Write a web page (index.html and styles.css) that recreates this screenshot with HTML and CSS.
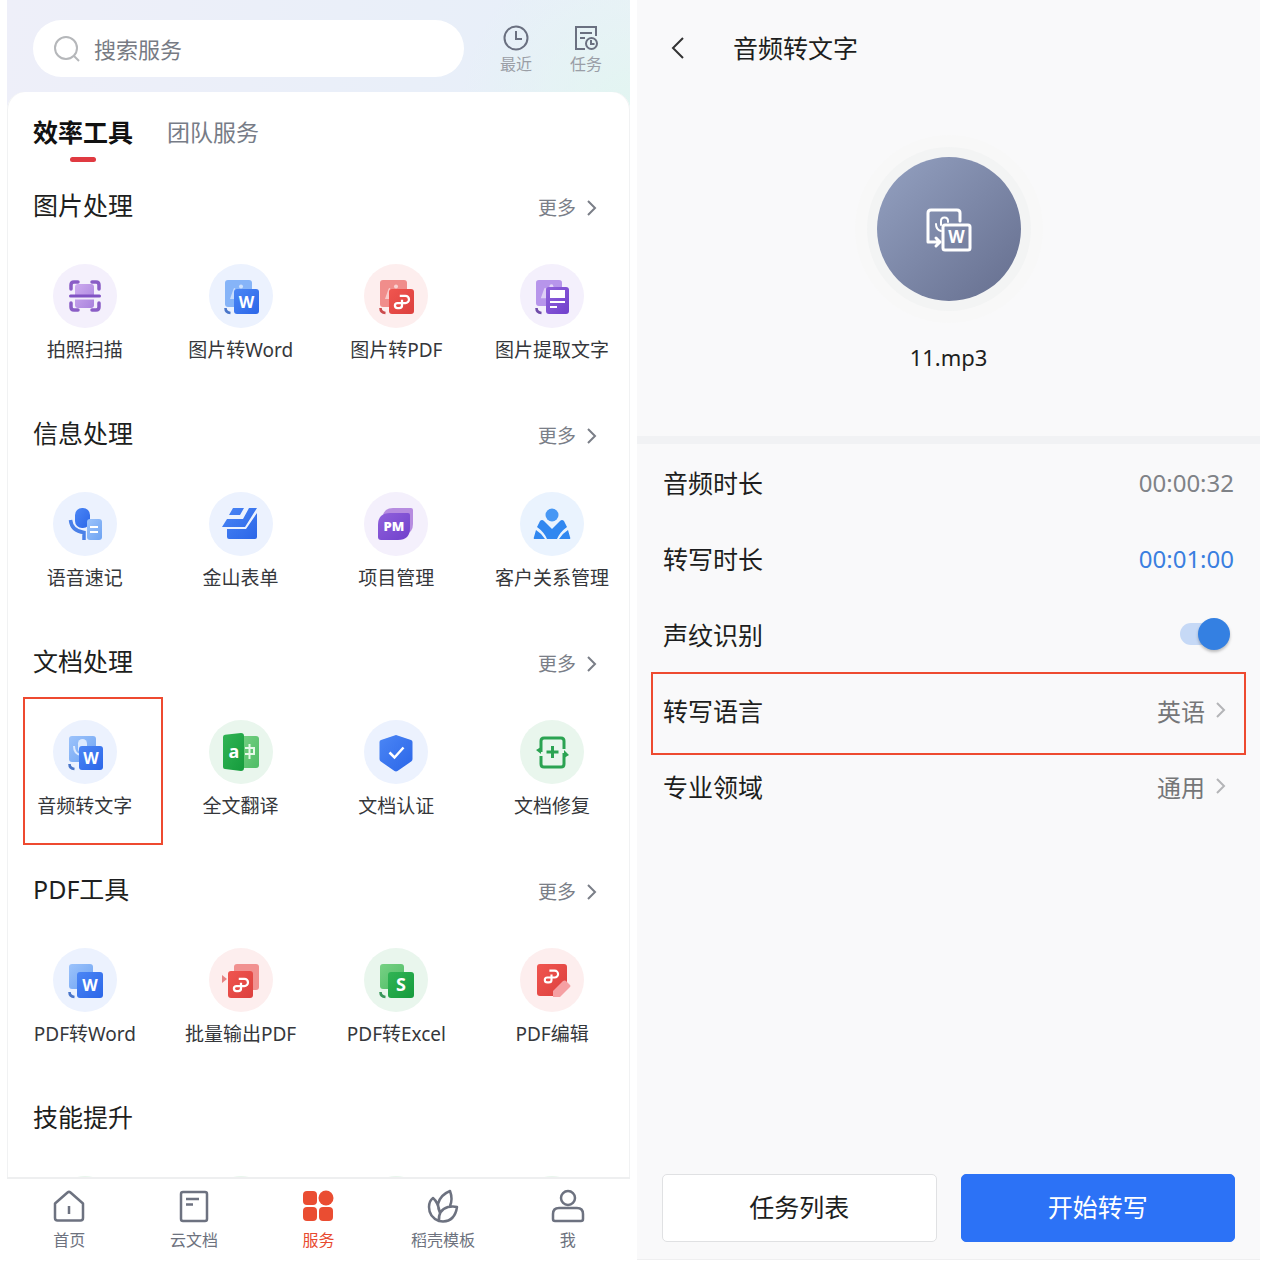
FILE: index.html
```
<!DOCTYPE html>
<html lang="zh-CN">
<head>
    <meta charset="UTF-8">
    <meta name="viewport" content="width=device-width, initial-scale=1.0">
    <title>音频转文字</title>
    <link rel="stylesheet" href="styles.css">
</head>
<body>
    <!-- 公用图标 -->
    <svg class="defs" aria-hidden="true">
        <defs>
            <linearGradient id="blue" x1="0" y1="0" x2="1" y2="1"><stop offset="0" stop-color="#4b86f5"/><stop offset="1" stop-color="#2b66e8"/></linearGradient>
            <linearGradient id="sky" x1="0" y1="0" x2="1" y2="1"><stop offset="0" stop-color="#9cc3fb"/><stop offset="1" stop-color="#6ea3f2"/></linearGradient>
            <linearGradient id="red" x1="0" y1="0" x2="1" y2="1"><stop offset="0" stop-color="#f0554f"/><stop offset="1" stop-color="#dc403e"/></linearGradient>
            <linearGradient id="purple" x1="0" y1="0" x2="1" y2="1"><stop offset="0" stop-color="#9061db"/><stop offset="1" stop-color="#7040cc"/></linearGradient>
            <linearGradient id="lilac" x1="0" y1="0" x2="1" y2="1"><stop offset="0" stop-color="#cdabef"/><stop offset="1" stop-color="#a982dd"/></linearGradient>
            <linearGradient id="green" x1="0" y1="0" x2="1" y2="1"><stop offset="0" stop-color="#31b455"/><stop offset="1" stop-color="#159b3c"/></linearGradient>
            <linearGradient id="mint" x1="0" y1="0" x2="1" y2="1"><stop offset="0" stop-color="#77d184"/><stop offset="1" stop-color="#4fbc66"/></linearGradient>
        </defs>
        <symbol id="chevron" viewBox="0 0 12 18"><path d="M2 2l7 7-7 7" fill="none" stroke="currentColor" stroke-width="2"/></symbol>
        <symbol id="swirl" viewBox="0 0 16 16"><path d="M6 2.500h5a3.200 3.200 0 0 1 0 6.400H4a2.300 2.300 0 0 0 0 4.600h1.500q2.500 0 2.500-2.300V6" fill="none" stroke="#fff" stroke-width="2"/></symbol>
        <symbol id="photo" viewBox="0 0 27 27"><rect width="27" height="27" rx="3" fill="currentColor"/><path d="M5 19l3.500-10q1-2 2 0l2 10z" fill="#fff" opacity=".55"/><circle cx="16" cy="6.500" r="2" fill="#fff" opacity=".6"/></symbol>
        <symbol id="hook" viewBox="0 0 8 8"><path d="M1.500 1q0 4.500 5 5" fill="none" stroke="currentColor" stroke-width="2.600"/></symbol>
    </svg>

    <div class="screens">
        <main class="screen services">
            <header class="top">
                <label class="search">
                    <svg width="28" height="28" viewBox="0 0 28 28"><circle cx="13" cy="13" r="11" /><path d="M21 21l5 5"/></svg>
                    <input type="search" placeholder="搜索服务" aria-label="搜索服务">
                </label>
                <a class="action" href="#">
                    <svg width="28" height="28" viewBox="0 0 28 28"><circle cx="14" cy="14" r="11.500"/><path d="M14 7v8h6"/></svg>
                    最近
                </a>
                <a class="action" href="#">
                    <svg width="28" height="28" viewBox="0 0 28 28"><path d="M24 12V3H4v22h9M8 9h12M8 14h5"/><circle cx="19.500" cy="19.500" r="5.500"/><path d="M19 16v4h3.500"/></svg>
                    任务
                </a>
            </header>

            <div class="sheet">
                <nav class="tabs">
                    <button class="tab active">效率工具</button>
                    <button class="tab">团队服务</button>
                </nav>

                <section class="group">
                    <div class="group-head">
                        <h2>图片处理</h2>
                        <a class="more" href="#">更多 <svg width="12" height="18"><use href="#chevron"/></svg></a>
                    </div>
                    <div class="tools">
                        <a class="tool" href="#">
                            <svg class="icon violet" viewBox="0 0 64 64">
                                <rect x="22" y="20" width="19" height="24" rx="3" fill="url(#lilac)"/>
                                <path d="M18 25v-4q0-3 3-3h4M39 18h4q3 0 3 3v4M18 39v4q0 3 3 3h4M39 46h4q3 0 3-3v-4" fill="none" stroke="#8a5dc6" stroke-width="3.500" stroke-linecap="round"/>
                                <path d="M22 34h20" stroke="#f2ecfb" stroke-width="3"/>
                                <path d="M17.500 32h29" stroke="#8153c4" stroke-width="3" stroke-linecap="round"/>
                            </svg>
                            拍照扫描
                        </a>
                        <a class="tool" href="#">
                            <svg class="icon azure" viewBox="0 0 64 64">
                                <use href="#photo" x="16" y="16" width="27" height="27" color="#86b4f8"/>
                                <use href="#hook" x="15" y="43" width="8" height="8" color="#4a76c9"/>
                                <rect x="25" y="25" width="25" height="25" rx="3" fill="url(#blue)"/>
                                <text class="mark" x="37.500" y="44">W</text>
                            </svg>
                            图片转Word
                        </a>
                        <a class="tool" href="#">
                            <svg class="icon rose" viewBox="0 0 64 64">
                                <use href="#photo" x="16" y="16" width="27" height="27" color="#f08d8b"/>
                                <use href="#hook" x="15" y="43" width="8" height="8" color="#cb4a4c"/>
                                <rect x="25" y="25" width="25" height="25" rx="3" fill="url(#red)"/>
                                <use href="#swirl" x="29" y="29" width="18" height="18"/>
                            </svg>
                            图片转PDF
                        </a>
                        <a class="tool" href="#">
                            <svg class="icon violet" viewBox="0 0 64 64">
                                <use href="#photo" x="16" y="16" width="26" height="26" color="#b795eb"/>
                                <use href="#hook" x="15" y="43" width="8" height="8" color="#6f4ba8"/>
                                <rect x="26" y="23" width="23" height="27" rx="3" fill="url(#purple)"/>
                                <path d="M30 26h15v8H30zM30 37h15v2H30zM30 42h7v2h-7z" fill="#fff"/>
                            </svg>
                            图片提取文字
                        </a>
                    </div>
                </section>

                <section class="group">
                    <div class="group-head">
                        <h2>信息处理</h2>
                        <a class="more" href="#">更多 <svg width="12" height="18"><use href="#chevron"/></svg></a>
                    </div>
                    <div class="tools">
                        <a class="tool" href="#">
                            <svg class="icon azure" viewBox="0 0 64 64">
                                <rect x="22" y="16" width="15" height="20" rx="7" fill="url(#blue)"/>
                                <path d="M17.500 28q1 11 13.500 12.500V48" fill="none" stroke="#4a80e8" stroke-width="3.500"/>
                                <rect x="34" y="27" width="15" height="21" rx="3" fill="url(#sky)"/>
                                <path d="M37 35h8M37 40h8" stroke="#fff" stroke-width="2"/>
                            </svg>
                            语音速记
                        </a>
                        <a class="tool" href="#">
                            <svg class="icon azure" viewBox="0 0 64 64">
                                <path d="M24 16h11l-4 7H20zM18 27h16l6-11h8L36 35H13zM18 37h19l11-16v24q0 2-2 2H20q-2 0-2-2z" fill="url(#blue)"/>
                            </svg>
                            金山表单
                        </a>
                        <a class="tool" href="#">
                            <svg class="icon violet" viewBox="0 0 64 64">
                                <path d="M19 24q1-8 10-8h18q2 0 2 2v14q0 8-7 10z" fill="#b68ce0"/>
                                <path d="M14 33q0-12 12-12h18q2 0 2 2v13q0 12-12 12H17q-3 0-3-3z" fill="url(#purple)"/>
                                <text class="mark small" x="30" y="39">PM</text>
                            </svg>
                            项目管理
                        </a>
                        <a class="tool" href="#">
                            <svg class="icon aqua" viewBox="0 0 64 64">
                                <circle cx="32" cy="23" r="6.500" fill="#4797f4"/>
                                <path d="M20 29q2-2 4 0l8 8 8-8q2-2 4 0l3 6q-7 5-10 12H27q-3-7-10-12zM16 38q5 3 9 9H15q-2 0-1-2zM48 38q-5 3-9 9h10q2 0 1-2z" fill="#3187f0"/>
                            </svg>
                            客户关系管理
                        </a>
                    </div>
                </section>

                <section class="group">
                    <div class="group-head">
                        <h2>文档处理</h2>
                        <a class="more" href="#">更多 <svg width="12" height="18"><use href="#chevron"/></svg></a>
                    </div>
                    <div class="tools">
                        <a class="tool marked" href="#">
                            <svg class="icon azure" viewBox="0 0 64 64">
                                <rect x="16" y="16" width="27" height="26" rx="3" fill="url(#sky)"/>
                                <rect x="25" y="19" width="9" height="14" rx="4.500" fill="#dceafe"/>
                                <path d="M21 26q0 8 7 9" fill="none" stroke="#dceafe" stroke-width="2"/>
                                <use href="#hook" x="15" y="43" width="8" height="8" color="#4a76c9"/>
                                <rect x="26" y="26" width="24" height="24" rx="3" fill="url(#blue)"/>
                                <text class="mark" x="38" y="44">W</text>
                            </svg>
                            音频转文字
                        </a>
                        <a class="tool" href="#">
                            <svg class="icon leaf" viewBox="0 0 64 64">
                                <rect x="30" y="16" width="20" height="32" rx="3" fill="url(#mint)"/>
                                <path d="M14 17q0-2 2-2.300l16-1.700q3 0 3 3v32q0 3-3 3l-16-2q-2 0-2-2z" fill="url(#green)"/>
                                <text class="mark big" x="25" y="38">a</text>
                                <path d="M36 28h9v6h-9M40.500 24v15" fill="none" stroke="#e6f9e9" stroke-width="2"/>
                            </svg>
                            全文翻译
                        </a>
                        <a class="tool" href="#">
                            <svg class="icon azure" viewBox="0 0 64 64">
                                <path d="M30.500 15.500q1.500-.8 3 0L47 20q1.500.5 1.500 2v17q0 1.500-1 2.300L33.500 51q-1.500.8-3 0l-14-9.700q-1-.8-1-2.300V22q0-1.500 1.500-2z" fill="url(#blue)"/>
                                <path d="M25.500 32.500l5 5 9-10" fill="none" stroke="#fff" stroke-width="2.500"/>
                            </svg>
                            文档认证
                        </a>
                        <a class="tool" href="#">
                            <svg class="icon leaf" viewBox="0 0 64 64">
                                <path d="M21 32V21q0-3 3-3h17q3 0 3 3v8M44 33v11q0 3-3 3H24q-3 0-3-3v-8M32.500 26v12M26.500 32h12" fill="none" stroke="#2ba352" stroke-width="3"/>
                                <path d="M16 30l5-3v7zM49 35l-5 3v-8z" fill="#2ba352"/>
                            </svg>
                            文档修复
                        </a>
                    </div>
                </section>

                <section class="group">
                    <div class="group-head">
                        <h2>PDF工具</h2>
                        <a class="more" href="#">更多 <svg width="12" height="18"><use href="#chevron"/></svg></a>
                    </div>
                    <div class="tools">
                        <a class="tool" href="#">
                            <svg class="icon azure" viewBox="0 0 64 64">
                                <rect x="16" y="16" width="24" height="25" rx="3" fill="url(#sky)"/>
                                <use href="#hook" x="15" y="43" width="8" height="8" color="#4a76c9"/>
                                <rect x="24" y="24" width="26" height="26" rx="3" fill="url(#blue)"/>
                                <text class="mark" x="37" y="43">W</text>
                            </svg>
                            PDF转Word
                        </a>
                        <a class="tool" href="#">
                            <svg class="icon rose" viewBox="0 0 64 64">
                                <rect x="25" y="16" width="25" height="26" rx="3" fill="#f19190"/>
                                <rect x="19" y="23" width="25" height="27" rx="3" fill="url(#red)"/>
                                <path d="M13 27l5 4-5 4z" fill="#e78383"/>
                                <use href="#swirl" x="23" y="28" width="18" height="18"/>
                            </svg>
                            批量输出PDF
                        </a>
                        <a class="tool" href="#">
                            <svg class="icon leaf" viewBox="0 0 64 64">
                                <rect x="16" y="16" width="24" height="25" rx="3" fill="url(#mint)"/>
                                <use href="#hook" x="15" y="43" width="8" height="8" color="#39965a"/>
                                <rect x="24" y="24" width="26" height="26" rx="3" fill="url(#green)"/>
                                <text class="mark big" x="37" y="43">S</text>
                            </svg>
                            PDF转Excel
                        </a>
                        <a class="tool" href="#">
                            <svg class="icon rose" viewBox="0 0 64 64">
                                <path d="M20 16h24q3 0 3 3v16L33 48H20q-3 0-3-3V19q0-3 3-3z" fill="url(#red)"/>
                                <path d="M33 49v-6l10-10q2-1 3 0l4 4q1 1 0 2L40 49z" fill="#f5a0a3"/>
                                <use href="#swirl" x="23" y="20" width="17" height="17"/>
                            </svg>
                            PDF编辑
                        </a>
                    </div>
                </section>

                <section class="group">
                    <div class="group-head">
                        <h2>技能提升</h2>
                    </div>
                    <div class="tools">
                        <span class="tool"><i class="icon leaf"></i></span>
                        <span class="tool"><i class="icon leaf"></i></span>
                        <span class="tool"><i class="icon leaf"></i></span>
                        <span class="tool"><i class="icon leaf"></i></span>
                    </div>
                </section>
            </div>

            <nav class="bottom">
                <a href="#">
                    <svg width="34" height="34" viewBox="0 0 34 34"><path d="M3 14.500L15.500 3.500q1.500-1.200 3 0L31 14.500V29q0 2.500-2.500 2.500h-23Q3 31.500 3 29zM17 17v8"/></svg>
                    首页
                </a>
                <a href="#">
                    <svg width="34" height="34" viewBox="0 0 34 34"><rect x="4" y="3" width="26" height="29" rx="2"/><path d="M9 10h13M9 15.500h7"/></svg>
                    云文档
                </a>
                <a class="current" href="#">
                    <svg width="34" height="34" viewBox="0 0 34 34"><rect x="2" y="2" width="14" height="14" rx="4"/><circle cx="25" cy="9" r="7.500"/><rect x="2" y="18" width="14" height="14" rx="4"/><rect x="18" y="18" width="14" height="14" rx="4"/></svg>
                    服务
                </a>
                <a href="#">
                    <svg width="34" height="34" viewBox="0 0 34 34"><path d="M13 32Q3 28 3 18q0-6 4-9 5 4 7 15M13 32q-1-11 9-14 5-1 9 0-2 14-14 14.500zM12 15q2-9 12-13 3 8 0 15M14 24q-2-4-2-9"/></svg>
                    稻壳模板
                </a>
                <a href="#">
                    <svg width="34" height="34" viewBox="0 0 34 34"><circle cx="17" cy="9" r="7"/><path d="M2 25q0-6 6-6h18q6 0 6 6v5q0 2-2 2H4q-2 0-2-2z"/></svg>
                    我
                </a>
            </nav>
        </main>

        <main class="screen convert">
            <header class="title-bar">
                <button class="back" aria-label="返回"><svg width="16" height="26" viewBox="0 0 16 26"><path d="M13 3L3 13l10 10"/></svg></button>
                <h1>音频转文字</h1>
            </header>

            <div class="file">
                <div class="disc">
                    <svg width="48" height="48" viewBox="0 0 48 48">
                        <path d="M35 16V8q0-3-3-3H6Q3 5 3 8v29h11M11 33l4 4-4 4"/>
                        <path class="mic" d="M16 20v-4q0-3.500 3.500-3.500T23 16v1M11 19q0 6 5 7"/>
                        <rect x="18" y="20" width="27" height="25" rx="2"/>
                        <text x="31.500" y="38">W</text>
                    </svg>
                </div>
                <p>11.mp3</p>
            </div>

            <div class="options">
                <div class="option">
                    <span>音频时长</span>
                    <span class="value">00:00:32</span>
                </div>
                <div class="option">
                    <span>转写时长</span>
                    <span class="value link">00:01:00</span>
                </div>
                <div class="option">
                    <label for="voiceprint">声纹识别</label>
                    <input class="switch" type="checkbox" id="voiceprint" checked>
                </div>
                <a class="option marked" href="#">
                    <span>转写语言</span>
                    <span class="value pick">英语 <svg width="12" height="18"><use href="#chevron"/></svg></span>
                </a>
                <a class="option" href="#">
                    <span>专业领域</span>
                    <span class="value pick">通用 <svg width="12" height="18"><use href="#chevron"/></svg></span>
                </a>
            </div>

            <footer class="buttons">
                <button>任务列表</button>
                <button class="primary">开始转写</button>
            </footer>
        </main>
    </div>
</body>
</html>
```

FILE: styles.css
```
* {
    box-sizing: border-box;
}
body {
    margin: 0;
    background: #fff;
    color: #1d1e20;
    font-family: "Noto Sans", "Noto Sans CJK SC", sans-serif;
}
h1, h2, p {
    margin: 0;
    font-weight: 400;
}
a {
    color: inherit;
    text-decoration: none;
}
button, input {
    font-family: inherit;
    color: inherit;
}
.defs {
    position: absolute;
    width: 0;
    height: 0;
}
.screens {
    display: grid;
    grid-template-columns: 1fr 1fr;
    gap: 7px;
    height: 100vh;
    padding: 0 7px 7px;
}
.screen {
    display: flex;
    flex-direction: column;
    min-width: 0;
    min-height: 0;
}

/* 服务页 */
.services {
    background: radial-gradient(circle at 100% 110px, #e2f5f1, transparent 170px),
                linear-gradient(100deg, #eeeff9 0%, #e8eff9 60%, #eff3f9 100%);
}
.top {
    display: flex;
    align-items: center;
    gap: 34px;
    padding: 20px 26px 15px;
}
.search {
    display: flex;
    flex: 1;
    align-items: center;
    gap: 13px;
    min-width: 0;
    height: 57px;
    padding: 0 20px;
    border-radius: 29px;
    background: #fff;
}
.search svg {
    flex: none;
    fill: none;
    stroke: #b5b7ba;
    stroke-width: 2;
}
.search input {
    flex: 1;
    min-width: 0;
    padding: 0;
    border: none;
    outline: none;
    background: none;
    font-size: 22px;
    line-height: 30px;
}
.search input::placeholder {
    color: #777b84;
}
.action {
    display: flex;
    flex-direction: column;
    align-items: center;
    gap: 2px;
    width: 36px;
    color: #9a9ea6;
    font-size: 16px;
    line-height: 20px;
    white-space: nowrap;
}
.action svg {
    fill: none;
    stroke: #6a7080;
    stroke-width: 2;
}
.sheet {
    flex: 1;
    min-height: 0;
    overflow: hidden;
    border-radius: 18px 18px 0 0;
    background: #fff;
    box-shadow: inset 1px 0 #f1f2f3, inset -1px 0 #f1f2f3;
}
.tabs {
    display: flex;
    align-items: flex-start;
    gap: 34px;
    height: 96px;
    padding: 23px 26px 0;
}
.tab {
    padding: 0;
    border: none;
    background: none;
    color: #777c87;
    font-size: 23px;
    line-height: 34px;
}
.tab.active {
    color: #111;
    font-size: 25px;
    font-weight: 700;
}
.tab.active::after {
    content: "";
    display: block;
    width: 26px;
    height: 5px;
    margin: 8px auto 0;
    border-radius: 3px;
    background: #e03a41;
}
.group {
    padding-bottom: 53px;
}
.group-head {
    display: flex;
    align-items: flex-end;
    justify-content: space-between;
    padding: 0 32px 0 26px;
}
.group-head h2 {
    font-size: 25px;
    line-height: 34px;
}
.more {
    display: flex;
    align-items: center;
    gap: 10px;
    color: #7a7e87;
    font-size: 19px;
    line-height: 28px;
}
.tools {
    display: grid;
    grid-template-columns: repeat(4, 1fr);
    margin-top: 42px;
}
.tool {
    position: relative;
    display: flex;
    flex-direction: column;
    align-items: center;
    gap: 9px;
    color: #35373b;
    font-size: 19px;
    line-height: 26px;
    white-space: nowrap;
}
.icon {
    width: 64px;
    height: 64px;
    border-radius: 50%;
}
.violet {
    background: #f4f0fc;
}
.azure {
    background: #ecf2fe;
}
.aqua {
    background: #eaf3fe;
}
.rose {
    background: #fdeeee;
}
.leaf {
    background: #e9f6ed;
}
.mark {
    fill: #fff;
    font-size: 16px;
    font-weight: 700;
    text-anchor: middle;
}
.mark.small {
    font-size: 13px;
    font-weight: 900;
}
.mark.big {
    font-size: 18px;
}
.marked::after {
    content: "";
    position: absolute;
    border: 2px solid #ee4a30;
    pointer-events: none;
}
.tool.marked::after {
    inset: -23px 0 -26px 16px;
}
.bottom {
    display: grid;
    grid-template-columns: repeat(5, 1fr);
    border-top: 2px solid #eeeff0;
    background: #fff;
}
.bottom a {
    display: flex;
    flex-direction: column;
    align-items: center;
    gap: 7px;
    padding: 10px 0;
    color: #6d727e;
    font-size: 16px;
    line-height: 20px;
}
.bottom svg {
    fill: none;
    stroke: #6d7280;
    stroke-width: 2.5;
    stroke-linejoin: round;
}
.bottom .current {
    color: #e8492f;
}
.bottom .current svg {
    fill: #ea4d32;
    stroke: none;
}

/* 转写页 */
.convert {
    background: #f9f9fa;
    border-bottom: 1px solid #efeff0;
}
.title-bar {
    display: flex;
    align-items: center;
    gap: 40px;
    height: 96px;
    padding: 0 26px;
}
.title-bar h1 {
    font-size: 25px;
    line-height: 34px;
}
.back {
    display: flex;
    justify-content: center;
    width: 30px;
    padding: 0;
    border: none;
    background: none;
}
.back svg {
    fill: none;
    stroke: #333;
    stroke-width: 2;
}
.file {
    display: flex;
    flex-direction: column;
    align-items: center;
    gap: 39px;
    padding: 61px 0 62px;
    border-bottom: 8px solid #f1f2f4;
}
.file p {
    font-size: 22px;
    line-height: 34px;
}
.disc {
    display: flex;
    align-items: center;
    justify-content: center;
    width: 144px;
    height: 144px;
    border-radius: 50%;
    background: linear-gradient(135deg, #94a1c1, #656e8e);
    box-shadow: 0 0 0 10px #f3f4f4, 0 0 0 22px #f8f8f8;
}
.disc svg {
    fill: none;
    stroke: #fff;
    stroke-width: 3;
    stroke-linecap: round;
    stroke-linejoin: round;
}
.disc .mic {
    stroke-width: 2;
}
.disc text {
    fill: #fff;
    stroke: none;
    font-size: 17px;
    font-weight: 700;
    text-anchor: middle;
}
.option {
    position: relative;
    display: flex;
    align-items: center;
    justify-content: space-between;
    height: 76px;
    padding: 0 26px;
    font-size: 25px;
}
.value {
    color: #7f8287;
    font-size: 24px;
}
.value.link {
    color: #3a7fe0;
}
.pick {
    display: flex;
    align-items: center;
    gap: 10px;
    padding-right: 7px;
    color: #757678;
}
.pick svg {
    color: #b4b5b7;
}
.option.marked::after {
    inset: 0 14px -7px;
}
.switch {
    appearance: none;
    position: relative;
    width: 48px;
    height: 22px;
    margin: 0 6px 0 0;
    border-radius: 11px;
    background: #c6d9f6;
}
.switch::after {
    content: "";
    position: absolute;
    top: -5px;
    left: 0;
    width: 32px;
    height: 32px;
    border-radius: 50%;
    background: #3480e2;
    box-shadow: 0 2px 3px rgba(0, 0, 0, 0.25);
}
.switch:checked::after {
    left: 18px;
}
.buttons {
    display: grid;
    grid-template-columns: 1fr 1fr;
    gap: 24px;
    margin-top: auto;
    padding: 0 25px 17px;
}
.buttons button {
    height: 68px;
    padding: 0 0 4px;
    border: 1px solid #e0e1e3;
    border-radius: 5px;
    background: #fff;
    font-size: 25px;
}
.buttons .primary {
    border-color: #2c72f6;
    background: #2c72f6;
    color: #fff;
}
```
